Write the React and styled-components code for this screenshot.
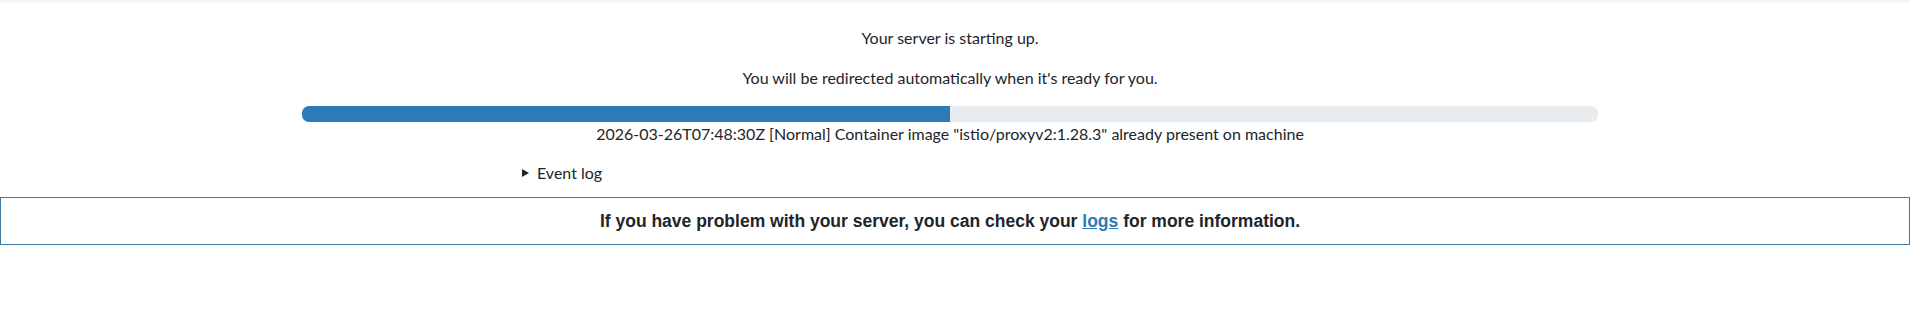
import React from 'react';
import styled, { createGlobalStyle } from 'styled-components';

const GlobalStyle = createGlobalStyle`
  html, body {
    margin: 0;
    padding: 0;
    background: #ffffff;
  }
  body {
    font-family: Lato, "Liberation Sans", sans-serif;
    font-size: 16px;
    line-height: 24px;
    color: #212529;
  }
`;

const TopStrip = styled.div`
  height: 3px;
  background: #f6f6f6;
`;

const Main = styled.div`
  padding: 23px 17px 0 7px;
  max-width: 1296px;
  margin: 0 auto;
`;

const Line = styled.p`
  margin: 0 0 16px;
  text-align: center;
`;

const Progress = styled.div`
  display: flex;
  height: 16px;
  border-radius: 7px;
  background: #e9ecef;
  overflow: hidden;
`;

const ProgressBar = styled.div`
  background: #2c7bb6;
  height: 100%;
`;

const Message = styled.p`
  margin: 0;
  text-align: center;
`;

const Details = styled.details`
  margin: 15px 0 12px 220px;
`;

const Summary = styled.summary`
  display: flex;
  align-items: center;
  gap: 8px;
  list-style: none;
  cursor: pointer;
  &::-webkit-details-marker {
    display: none;
  }
`;

const Arrow = styled.span`
  width: 0;
  height: 0;
  border-top: 4px solid transparent;
  border-bottom: 4px solid transparent;
  border-left: 7px solid #212529;
`;

const Notice = styled.div`
  border: 1px solid #4279a0;
  padding: 11px 10px 11px 0;
  text-align: center;
  font-family: "Liberation Sans", Lato, sans-serif;
  font-size: 17.5px;
  font-weight: bold;
`;

const LogsLink = styled.a`
  color: #2c7bb6;
  text-decoration: underline;
`;

function App() {
  const percent = 50;
  return (
    <>
      <GlobalStyle />
      <TopStrip />
      <Main>
        <Line>Your server is starting up.</Line>
        <Line>You will be redirected automatically when it's ready for you.</Line>
        <Progress>
          <ProgressBar style={{ width: percent + '%' }} />
        </Progress>
        <Message>
          2026-03-26T07:48:30Z [Normal] Container image "istio/proxyv2:1.28.3" already present on machine
        </Message>
        <Details>
          <Summary>
            <Arrow />
            Event log
          </Summary>
        </Details>
      </Main>
      <Notice>
        If you have problem with your server, you can check your <LogsLink href="#">logs</LogsLink> for more information.
      </Notice>
    </>
  );
}

export default App;
